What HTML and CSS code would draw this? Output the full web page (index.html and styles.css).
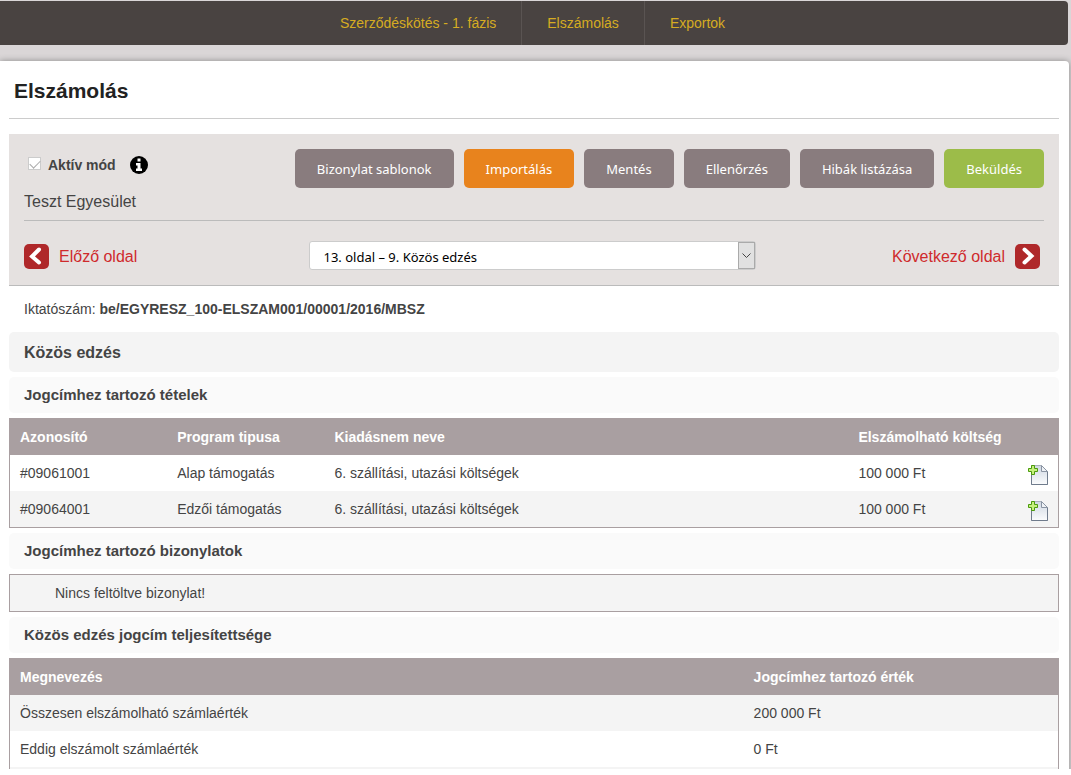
FILE: index.html
```
<!DOCTYPE html>
<html lang="hu">
<head>
<meta charset="utf-8">
<title>Elszámolás</title>
<link rel="stylesheet" href="styles.css">
</head>
<body>
<svg class="defs" aria-hidden="true">
  <defs>
    <linearGradient id="paper" x1="0" y1="0" x2="0" y2="1">
      <stop offset="0" stop-color="#cfd7e2"/><stop offset="1" stop-color="#fbfcfd"/>
    </linearGradient>
    <symbol id="add-page" viewBox="0 0 20 20">
      <path d="M3.500 .5H13.500L19.500 6.500V19.500H3.500Z" fill="url(#paper)" stroke="#a9b0bb"/>
      <path d="M3.500 8V19.500H19.500V6.500" fill="none" stroke="#6f7b8c"/>
      <path d="M13.500 .5V6.500H19.500Z" fill="#eef1f5" stroke="#8a94a3"/>
      <path d="M3.500 .5H6.500V3.500H9.500V6.500H6.500V9.500H3.500V6.500H.5V3.500H3.500Z" fill="#c6f07c" stroke="#4a9a0c"/>
    </symbol>
  </defs>
</svg>
<div class="stage">
  <nav class="topnav">
    <a href="#">Szerződéskötés - 1. fázis</a>
    <a href="#">Elszámolás</a>
    <a href="#">Exportok</a>
  </nav>
  <main class="page">
    <h1>Elszámolás</h1>
    <section class="panel">
      <div class="panel-top">
        <div class="status">
          <div class="mode">
            <input type="checkbox" id="active" checked disabled>
            <label for="active">Aktív mód</label>
            <svg class="info" viewBox="0 0 18 18" aria-hidden="true">
              <circle cx="9" cy="9" r="9"/>
              <path d="M7.500 2.500h3v3h-3zM6 7h4.500v5.500H12V15H6v-2.500h1.500v-3H6z" fill="#fff"/>
            </svg>
          </div>
          <p class="club">Teszt Egyesület</p>
        </div>
        <div class="actions">
          <button type="button">Bizonylat sablonok</button>
          <button type="button" class="orange">Importálás</button>
          <button type="button">Mentés</button>
          <button type="button">Ellenőrzés</button>
          <button type="button">Hibák listázása</button>
          <button type="button" class="green">Beküldés</button>
        </div>
      </div>
      <div class="pager">
        <a href="#"><svg viewBox="0 0 25 25" aria-hidden="true"><rect width="25" height="25" rx="5"/><path d="M15 5.500L8 12.500L15 18.500"/></svg>Előző oldal</a>
        <div class="picker">
          <select aria-label="Oldal"><option>13. oldal – 9. Közös edzés</option></select>
          <span class="arrow"><svg viewBox="0 0 9 5" aria-hidden="true"><path d="M.5 .5L4.500 4.500L8.500 .5"/></svg></span>
        </div>
        <a href="#" class="next">Következő oldal<svg viewBox="0 0 25 25" aria-hidden="true"><rect width="25" height="25" rx="5"/><path d="M9.500 5.500L16.500 12L9.500 18.500"/></svg></a>
      </div>
    </section>
    <p class="file-no">Iktatószám: <strong>be/EGYRESZ_100-ELSZAM001/00001/2016/MBSZ</strong></p>
    <h2>Közös edzés</h2>
    <h3>Jogcímhez tartozó tételek</h3>
    <table class="items">
      <thead>
        <tr><th class="c15">Azonosító</th><th class="c15">Program tipusa</th><th class="c50">Kiadásnem neve</th><th colspan="2">Elszámolható költség</th></tr>
      </thead>
      <tbody>
        <tr><td>#09061001</td><td>Alap támogatás</td><td>6. szállítási, utazási költségek</td><td>100 000 Ft</td><td class="add"><button type="button" aria-label="Hozzáadás"><svg aria-hidden="true"><use href="#add-page"/></svg></button></td></tr>
        <tr class="alt"><td>#09064001</td><td>Edzői támogatás</td><td>6. szállítási, utazási költségek</td><td>100 000 Ft</td><td class="add"><button type="button" aria-label="Hozzáadás"><svg aria-hidden="true"><use href="#add-page"/></svg></button></td></tr>
      </tbody>
    </table>
    <h3>Jogcímhez tartozó bizonylatok</h3>
    <p class="empty">Nincs feltöltve bizonylat!</p>
    <h3>Közös edzés jogcím teljesítettsége</h3>
    <table>
      <thead>
        <tr><th class="c70">Megnevezés</th><th>Jogcímhez tartozó érték</th></tr>
      </thead>
      <tbody>
        <tr class="alt"><td>Összesen elszámolható számlaérték</td><td>200 000 Ft</td></tr>
        <tr><td>Eddig elszámolt számlaérték</td><td>0 Ft</td></tr>
        <tr class="alt"><td></td><td></td></tr>
      </tbody>
    </table>
  </main>
</div>
</body>
</html>
```
FILE: styles.css
```
* { box-sizing: border-box; }

body {
  margin: 0;
  background: #fff;
  color: #444;
  font: 14px/20px "Liberation Sans", Arial, sans-serif;
}

h1, h2, h3, p { margin: 0; }
a { text-decoration: none; }
.defs { position: absolute; width: 0; height: 0; }

.stage {
  height: calc(100vh - 6px);
  overflow: hidden;
  padding: 1px 2px 0 0;
  background: #dad6d7;
}

.topnav {
  display: flex;
  justify-content: center;
  margin: 0 1px 16px 0;
  padding-right: 3px;
  background: #494341;
  border-radius: 0 4px 4px 0;
}
.topnav a {
  padding: 12px 25px;
  color: #d6ac22;
}
.topnav a + a { border-left: 1px solid #5a5452; }

.page {
  min-height: 100%;
  padding: 0 10px 0 9px;
  background: #fff;
  border-radius: 0 4px 0 0;
  box-shadow: 0 0 6px #888;
}

h1 {
  padding: 16px 5px 13px;
  border-bottom: 1px solid #ccc;
  color: #222;
  font-size: 21px;
  line-height: 28px;
}

.panel {
  margin-top: 15px;
  padding: 15px;
  background: #e5e1e0;
  border-bottom: 1px solid #bbb;
}
.panel-top {
  display: flex;
  justify-content: space-between;
  height: 72px;
  border-bottom: 1px solid #bbb;
}
.mode {
  display: flex;
  align-items: center;
  height: 32px;
  font-weight: bold;
}
.mode input {
  appearance: none;
  width: 13px;
  height: 13px;
  margin: 0 7px 3px 4px;
  border: 1px solid #ccc;
  background: #fff;
}
.mode input:checked::before {
  content: "";
  display: block;
  width: 9px;
  height: 5px;
  margin: 2px 1px;
  border: solid #aaa;
  border-width: 0 0 1px 1px;
  rotate: -45deg;
}
.info { width: 18px; height: 18px; margin-left: 14px; }
.club { padding-top: 11px; font-size: 16px; }

.actions { display: flex; gap: 10px; }
.actions button {
  height: 39px;
  padding: 0 22px;
  border: 0;
  border-radius: 5px;
  background: #897c7e;
  color: #fff;
  font: 13px "Noto Sans", Tahoma, sans-serif;
}
.actions .orange { background: #e8831d; }
.actions .green { background: #9cbc49; }

.pager {
  display: grid;
  grid-template-columns: 1fr 447px 1fr;
  align-items: center;
  padding: 20px 4px 0 0;
}
.pager a {
  display: flex;
  align-items: center;
  gap: 10px;
  padding-top: 2px;
  color: #cf2a2c;
  font-size: 16px;
}
.pager .next { justify-content: flex-end; }
.pager a svg { width: 25px; height: 25px; fill: #af282a; }
.pager a path {
  fill: none;
  stroke: #fff;
  stroke-width: 4;
  stroke-linecap: round;
}
.picker { position: relative; }
.picker select {
  appearance: none;
  display: block;
  width: 100%;
  height: 29px;
  padding: 2px 14px 0;
  border: 1px solid #ccc;
  border-radius: 3px;
  background: #fff;
  color: #000;
  font: 13px "Noto Sans", Tahoma, sans-serif;
}
.arrow {
  position: absolute;
  inset: 1px 1px 1px auto;
  display: grid;
  place-items: center;
  width: 17px;
  border: 1px solid #aaa;
  background: #e1e1e1;
  pointer-events: none;
}
.arrow svg { width: 9px; height: 5px; fill: none; stroke: #444; overflow: visible; }

.file-no { padding: 13px 15px; }

h2 {
  padding: 11px 15px 9px;
  border-radius: 5px;
  background: #f4f4f4;
  font-size: 16px;
  line-height: 20px;
}
h3 {
  margin: 5px 0;
  padding: 8px 15px;
  border-radius: 5px;
  background: #fafafa;
  font-size: 15px;
  line-height: 20px;
}

table {
  width: 100%;
  border: 1px solid #a99fa1;
  border-spacing: 0;
  table-layout: fixed;
}
th, td { height: 36px; padding: 0 10px; text-align: left; }
th { background: #a99fa1; color: #fff; }
.alt td { background: #f4f4f4; }
.c15 { width: 15%; }
.c50 { width: 50%; }
.c70 { width: 70%; }
.items td:nth-child(4) { white-space: nowrap; }
.add button {
  display: block;
  margin: 4px 0 0 auto;
  padding: 0;
  border: 0;
  background: none;
}
.add svg { display: block; width: 20px; height: 20px; }

.empty {
  padding: 8px 45px;
  border: 1px solid #a99fa1;
  background: #f4f4f4;
}
```
